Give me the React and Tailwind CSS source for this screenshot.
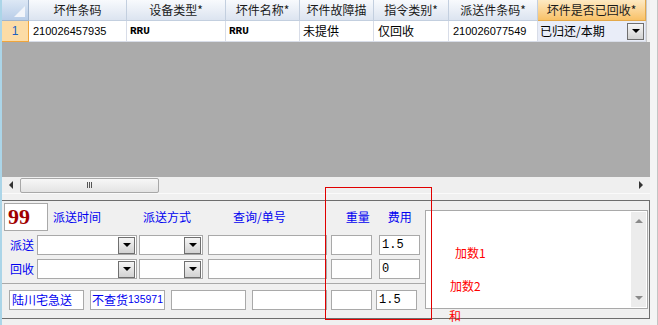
const cjk = "font-['Noto_Sans_CJK_SC',sans-serif]";

function Head({ className, children }) {
  return (
    <div
      className={`h-full flex items-center justify-center border-r border-b text-[12px] text-[#1a1a1a] ${className}`}
    >
      {children}
    </div>
  );
}

function Cell({ className, children }) {
  return (
    <div className={`h-full flex items-center border-r border-b border-[#d8dde8] whitespace-nowrap overflow-hidden ${className}`}>
      {children}
    </div>
  );
}

function DropButton() {
  return (
    <div className="w-[17px] h-[17px] border border-[#6f6f6f] bg-linear-to-b from-[#f6f6f6] to-[#d2d2d2] flex items-center justify-center">
      <div className="w-0 h-0 border-l-[4px] border-r-[4px] border-t-[4px] border-l-transparent border-r-transparent border-t-black" />
    </div>
  );
}

function Combo({ className }) {
  return (
    <div className={`h-[20px] bg-white border border-[#a9a9a9] flex justify-end items-center pr-px ${className}`}>
      <DropButton />
    </div>
  );
}

function Box({ className, children }) {
  return (
    <div className={`h-[20px] bg-white border border-[#a9a9a9] flex items-center whitespace-nowrap overflow-hidden ${className}`}>
      {children}
    </div>
  );
}

export default function App() {
  return (
    <div className={`relative w-[658px] h-[325px] flex bg-[#f0f0f0] overflow-hidden ${cjk}`}>
      <div className="w-[2px] bg-[#abd5e8]" />

      <div className="w-[648px] flex flex-col">
        {/* grid */}
        <div className="h-[177px] flex flex-col bg-[#ababab]">
          <div className="h-[21px] flex bg-[#f0f0f0]">
            <div className="w-[27px] h-full border-r border-b border-[#9fb3cc] bg-linear-to-b from-[#dde8f5] to-[#b8cde8] flex items-end justify-end pr-[3px] pb-[3px]">
              <svg width="11" height="11" viewBox="0 0 11 11">
                <polygon points="11,0 11,11 0,11" fill="#f2f5fa" />
              </svg>
            </div>
            <Head className="w-[98px] border-[#c3cfdf] bg-linear-to-b from-[#f8fafd] to-[#dce4f0]">坏件条码</Head>
            <Head className="w-[99px] border-[#c3cfdf] bg-linear-to-b from-[#f8fafd] to-[#dce4f0]">设备类型*</Head>
            <Head className="w-[74px] border-[#c3cfdf] bg-linear-to-b from-[#f8fafd] to-[#dce4f0]">坏件名称*</Head>
            <Head className="w-[74px] border-[#c3cfdf] bg-linear-to-b from-[#f8fafd] to-[#dce4f0]">坏件故障描</Head>
            <Head className="w-[75px] border-[#c3cfdf] bg-linear-to-b from-[#f8fafd] to-[#dce4f0]">指令类别*</Head>
            <Head className="w-[89px] border-[#c3cfdf] bg-linear-to-b from-[#f8fafd] to-[#dce4f0]">派送件条码*</Head>
            <Head className="w-[108px] border-[#e3a84a] bg-linear-to-b from-[#fde9c2] to-[#f8c166]">坏件是否已回收*</Head>
            <div className="flex-1 border-l border-[#c8c8c8]" />
          </div>

          <div className="h-[21px] flex bg-[#f0f0f0]">
            <div className="w-[27px] h-full flex items-center justify-center border-r border-b border-[#efa53d] bg-[#fcdca6] text-[12px] text-[#2060c0] font-['Liberation_Sans',sans-serif]">
              1
            </div>
            <Cell className="w-[98px] bg-white pl-[4px] text-[11px] text-black font-['Liberation_Sans',sans-serif]">210026457935</Cell>
            <Cell className="w-[99px] bg-white pl-[3px] text-[11px] font-bold text-black font-['Liberation_Mono',monospace]">RRU</Cell>
            <Cell className="w-[74px] bg-white pl-[3px] text-[11px] font-bold text-black font-['Liberation_Mono',monospace]">RRU</Cell>
            <Cell className="w-[74px] bg-white pl-[3px] text-[12px] text-black">未提供</Cell>
            <Cell className="w-[75px] bg-white pl-[4px] text-[12px] text-black">仅回收</Cell>
            <Cell className="w-[89px] bg-white pl-[4px] text-[11px] text-black font-['Liberation_Sans',sans-serif]">210026077549</Cell>
            <Cell className="w-[108px] bg-[#e9edf8] pl-[2px] pr-[1px] justify-between text-[12px] text-black">
              <span>已归还/本期</span>
              <DropButton />
            </Cell>
            <div className="flex-1 border-l border-[#c8c8c8]" />
          </div>
          <div className="flex-1" />
        </div>

        {/* horizontal scrollbar */}
        <div className="h-[17px] flex items-center bg-[#efefef] border-b border-[#fafafa]">
          <div className="w-[18px] flex justify-center">
            <div className="w-0 h-0 border-t-[4px] border-b-[4px] border-r-[4px] border-t-transparent border-b-transparent border-r-[#333]" />
          </div>
          <div className="w-[139px] h-[15px] rounded-[2px] border border-[#a8a8a8] bg-linear-to-b from-[#f7f7f7] to-[#e3e3e3] flex items-center justify-center gap-[1px]">
            <div className="w-px h-[6px] bg-[#555]" />
            <div className="w-px h-[6px] bg-[#555]" />
            <div className="w-px h-[6px] bg-[#555]" />
          </div>
          <div className="flex-1" />
          <div className="w-[18px] flex justify-center">
            <div className="w-0 h-0 border-t-[4px] border-b-[4px] border-l-[4px] border-t-transparent border-b-transparent border-l-[#333]" />
          </div>
        </div>

        <div className="h-[6px]" />

        {/* detail panel */}
        <div className="h-[119px] flex border-t border-r border-b border-[#6e6e6e] text-[12px]">
          <div className="w-[423px] flex flex-col">
            <div className="h-[31px] flex items-center text-[#0000f0]">
              <div className="ml-[2px] w-[44px] h-[28px] bg-white border border-[#a9a9a9] flex items-center pl-[3px] text-[22px] leading-none font-bold text-[#a00000] font-['Liberation_Serif',serif]">
                99
              </div>
              <span className="ml-[5px]">派送时间</span>
              <span className="ml-[42px]">派送方式</span>
              <span className="ml-[42px]">查询/单号</span>
              <span className="ml-[60px]">重量</span>
              <span className="ml-[18px]">费用</span>
            </div>

            <div className="mt-[3px] flex items-center">
              <span className="ml-[8px] w-[27px] text-[#0000f0]">派送</span>
              <Combo className="w-[100px]" />
              <Combo className="ml-[2px] w-[64px]" />
              <Box className="ml-[5px] w-[119px]" />
              <Box className="ml-[4px] w-[41px]" />
              <Box className="ml-[7px] w-[41px] px-[2px] text-black font-['Liberation_Mono',monospace]">1.5</Box>
            </div>

            <div className="mt-[4px] flex items-center">
              <span className="ml-[8px] w-[27px] text-[#0000f0]">回收</span>
              <Combo className="w-[100px]" />
              <Combo className="ml-[2px] w-[64px]" />
              <Box className="ml-[5px] w-[119px]" />
              <Box className="ml-[4px] w-[41px]" />
              <Box className="ml-[7px] w-[41px] px-[2px] text-black font-['Liberation_Mono',monospace]">0</Box>
            </div>

            <div className="mt-[4px] border-b border-[#a9a9a9]" />

            <div className="mt-[6px] flex items-center">
              <Box className="ml-[7px] w-[75px] px-[2px] text-[#0000f0]">陆川宅急送</Box>
              <Box className="ml-[6px] w-[75px] px-px text-[#0000f0]">
                不查货<span className="text-[10.5px] font-['Liberation_Sans',sans-serif]">135971</span>
              </Box>
              <Box className="ml-[6px] w-[75px]" />
              <Box className="ml-[6px] w-[75px]" />
              <Box className="ml-[4px] w-[41px]" />
              <Box className="ml-[4px] w-[41px] px-[2px] text-black font-['Liberation_Mono',monospace]">1.5</Box>
            </div>
          </div>

          <div className="flex-1 pt-[9px] pr-px pb-[2px]">
            <div className="h-[99px] bg-white border border-[#a9a9a9] flex justify-end p-px">
              <div className="w-[15px] h-full bg-[#ececec] flex flex-col items-center justify-between py-[7px]">
                <div className="w-0 h-0 border-l-[4px] border-r-[4px] border-b-[4px] border-l-transparent border-r-transparent border-b-[#8a8a8a]" />
                <div className="w-0 h-0 border-l-[4px] border-r-[4px] border-t-[4px] border-l-transparent border-r-transparent border-t-[#8a8a8a]" />
              </div>
            </div>
          </div>
        </div>
        <div className="flex-1" />
      </div>

      <div className="flex-1 border-r border-[#c4c4c4] bg-[#f4f4f4]" />

      {/* overlays */}
      <div className="absolute left-[325px] top-[187px] w-[107px] h-[133px] border border-[#e00000] pointer-events-none" />
      <span className="absolute left-[455px] top-[244px] text-[12px] text-[#ff0000]">加数1</span>
      <span className="absolute left-[450px] top-[277px] text-[12px] text-[#ff0000]">加数2</span>
      <span className="absolute left-[449px] top-[307px] text-[12px] text-[#ff0000]">和</span>
    </div>
  );
}
